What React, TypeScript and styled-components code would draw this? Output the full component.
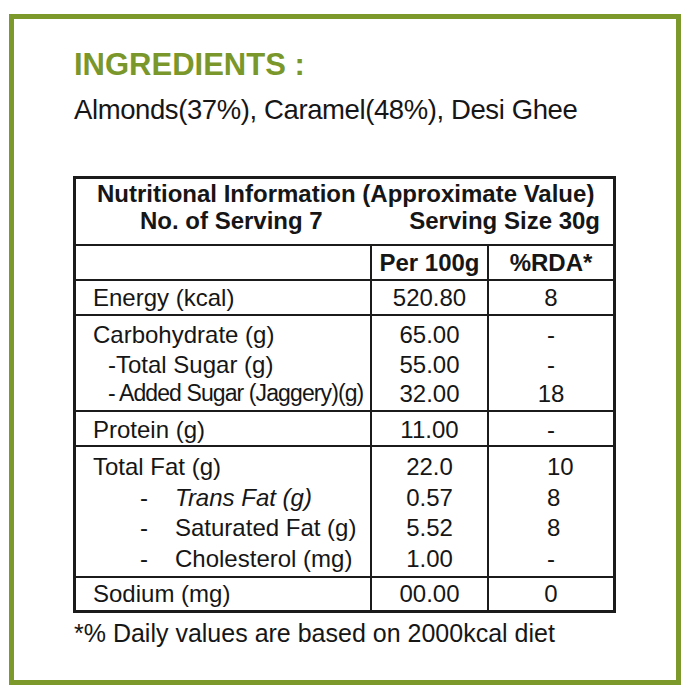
import React from 'react';
import styled, { createGlobalStyle } from 'styled-components';

const Global = createGlobalStyle`
  html, body { margin: 0; padding: 0; background: #ffffff; }
  body { font-family: "Liberation Sans", Arial, Helvetica, sans-serif; color: #161616; }
`;

const INK = '#1b1b1b';
const GREEN = '#7c992c';

const Page = styled.div`
  padding: 14px 9px 15px 9px;
`;

const Frame = styled.div`
  box-sizing: border-box;
  width: 672px;
  height: 671px;
  border: 5px solid ${GREEN};
  padding: 27px 0 0 59px;
  display: flex;
  flex-direction: column;
`;

const Title = styled.h1`
  margin: 0;
  padding-left: 1px;
  font-size: 31px;
  font-weight: 700;
  line-height: 37px;
  color: #7a972b;
`;

const Ingredients = styled.p`
  margin: 9px 0 0;
  padding-left: 1px;
  font-size: 27.5px;
  line-height: 35px;
  letter-spacing: -0.4px;
`;

const Table = styled.div`
  margin-top: 49px;
  width: 543px;
  box-sizing: border-box;
  border: 3px solid ${INK};
`;

const Header = styled.div`
  height: 67px;
  box-sizing: border-box;
  padding: 2px 13px 0 21px;
  border-bottom: 2px solid ${INK};
  font-size: 24px;
  font-weight: 700;
  line-height: 26.5px;
`;

const HeaderLine = styled.div<{ $split?: boolean }>`
  display: flex;
  justify-content: ${(p) => (p.$split ? 'space-between' : 'flex-start')};
  padding-left: ${(p) => (p.$split ? '43px' : '0')};
  white-space: nowrap;
`;

const Row = styled.div<{ $h: number; $last?: boolean }>`
  display: grid;
  grid-template-columns: 296px 117px 1fr;
  height: ${(p) => p.$h + (p.$last ? 0 : 2)}px;
  box-sizing: border-box;
  border-bottom: ${(p) => (p.$last ? 'none' : `2px solid ${INK}`)};
`;

const Cell = styled.div<{ $pt: number; $lh: number; $divider?: boolean; $align: 'left' | 'center'; $pl?: number; $bold?: boolean }>`
  box-sizing: border-box;
  border-right: ${(p) => (p.$divider ? `2px solid ${INK}` : 'none')};
  padding-top: ${(p) => p.$pt}px;
  padding-left: ${(p) => p.$pl ?? 0}px;
  text-align: ${(p) => p.$align};
  font-size: 24px;
  font-weight: ${(p) => (p.$bold ? 700 : 400)};
  line-height: ${(p) => p.$lh}px;
  white-space: nowrap;
`;

const Line = styled.div<{ $indent?: number; $narrow?: boolean }>`
  padding-left: ${(p) => p.$indent ?? 0}px;
  ${(p) => (p.$narrow ? 'font-size: 23px; letter-spacing: -0.9px;' : '')}
`;

const SubLine = styled.div`
  display: flex;
  padding-left: 47px;
`;

const Dash = styled.span`
  width: 35px;
`;

const Italic = styled.span`
  font-style: italic;
`;

const Footnote = styled.p`
  margin: 5px 0 0;
  padding-left: 1px;
  font-size: 25px;
  line-height: 30px;
`;

type LineData = {
  label: React.ReactNode;
  per: string;
  rda: string;
  kind?: 'main' | 'sub' | 'fat';
  narrow?: boolean;
};

type RowData = {
  h: number;
  pt: number;
  lh: number;
  rdaLeft?: boolean;
  last?: boolean;
  lines: LineData[];
};

const rows: RowData[] = [
  { h: 33, pt: 0, lh: 33, lines: [{ label: 'Energy (kcal)', per: '520.80', rda: '8' }] },
  {
    h: 94,
    pt: 4,
    lh: 29.5,
    lines: [
      { label: 'Carbohydrate (g)', per: '65.00', rda: '-' },
      { label: '-Total Sugar (g)', per: '55.00', rda: '-', kind: 'sub' },
      { label: '- Added Sugar (Jaggery)(g)', per: '32.00', rda: '18', kind: 'sub', narrow: true },
    ],
  },
  { h: 33, pt: 1, lh: 33, lines: [{ label: 'Protein (g)', per: '11.00', rda: '-' }] },
  {
    h: 129,
    pt: 5,
    lh: 30.5,
    rdaLeft: true,
    lines: [
      { label: 'Total Fat (g)', per: '22.0', rda: '10' },
      { label: <Italic>Trans Fat (g)</Italic>, per: '0.57', rda: '8', kind: 'fat' },
      { label: 'Saturated Fat (g)', per: '5.52', rda: '8', kind: 'fat' },
      { label: 'Cholesterol (mg)', per: '1.00', rda: '-', kind: 'fat' },
    ],
  },
  { h: 32, pt: 0, lh: 32, last: true, lines: [{ label: 'Sodium (mg)', per: '00.00', rda: '0' }] },
];

function Label({ line }: { line: LineData }) {
  if (line.kind === 'fat') {
    return (
      <SubLine>
        <Dash>-</Dash>
        <span>{line.label}</span>
      </SubLine>
    );
  }
  return (
    <Line $indent={line.kind === 'sub' ? 15 : 0} $narrow={line.narrow}>
      {line.label}
    </Line>
  );
}

export default function App() {
  return (
    <>
      <Global />
      <Page>
        <Frame>
          <Title>INGREDIENTS :</Title>
          <Ingredients>Almonds(37%), Caramel(48%), Desi Ghee</Ingredients>
          <Table>
            <Header>
              <HeaderLine>Nutritional Information (Approximate Value)</HeaderLine>
              <HeaderLine $split>
                <span>No. of Serving 7</span>
                <span>Serving Size 30g</span>
              </HeaderLine>
            </Header>
            <Row $h={33}>
              <Cell $pt={0} $lh={33} $divider $align="left" />
              <Cell $pt={0} $lh={33} $divider $align="center" $bold>
                Per 100g
              </Cell>
              <Cell $pt={0} $lh={33} $align="center" $bold>
                %RDA*
              </Cell>
            </Row>
            {rows.map((r, i) => (
              <Row key={i} $h={r.h} $last={r.last}>
                <Cell $pt={r.pt} $lh={r.lh} $divider $align="left" $pl={17}>
                  {r.lines.map((l, j) => (
                    <Label key={j} line={l} />
                  ))}
                </Cell>
                <Cell $pt={r.pt} $lh={r.lh} $divider $align="center">
                  {r.lines.map((l, j) => (
                    <Line key={j}>{l.per}</Line>
                  ))}
                </Cell>
                <Cell $pt={r.pt} $lh={r.lh} $align={r.rdaLeft ? 'left' : 'center'} $pl={r.rdaLeft ? 58 : 0}>
                  {r.lines.map((l, j) => (
                    <Line key={j}>{l.rda}</Line>
                  ))}
                </Cell>
              </Row>
            ))}
          </Table>
          <Footnote>*% Daily values are based on 2000kcal diet</Footnote>
        </Frame>
      </Page>
    </>
  );
}
